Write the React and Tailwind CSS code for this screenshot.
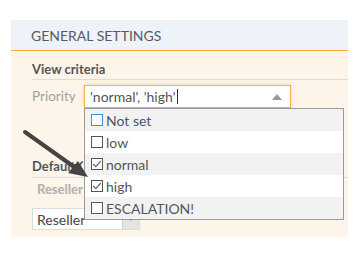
// Priority multi-select dropdown, opened over a settings panel
import { memo } from 'react';

const options = [
  { label: 'Not set', checked: false, focus: true },
  { label: 'low', checked: false },
  { label: 'normal', checked: true },
  { label: 'high', checked: true },
  { label: 'ESCALATION!', checked: false },
];

const CheckBox = ({ checked, focus }) => (
  <span
    className={`w-[12px] h-[12px] shrink-0 border bg-white flex items-center justify-center ${
      focus ? 'border-[#3d8fe0]' : 'border-[#555]'
    }`}
  >
    {checked && (
      <svg width="10" height="10" viewBox="0 0 10 10">
        <path d="M1.2 5 L3.8 7.6 L8.8 2" fill="none" stroke="#666" strokeWidth="1.2" />
      </svg>
    )}
  </span>
);

const App = memo(() => {
  return (
    <div
      className="w-[363px] h-[253px] bg-white pt-[20px] pl-[11px] text-[#555]"
      style={{ fontFamily: 'Lato, "Open Sans", sans-serif' }}
    >
      <div className="w-[337px] relative">
        {/* Cabecera */}
        <div className="h-[31px] bg-[#eef2f9] border-b border-[#f9ac3d] pl-[20px] flex items-center text-[14px] text-[#5a5a5a]">
          GENERAL SETTINGS
        </div>

        {/* Contenido */}
        <div className="bg-[#fdf4ea] h-[186px] pl-[21px] pt-[10px]">
          <div className="h-[19px] border-b border-[#dcdcdc] flex items-center text-[13px] font-bold text-[#555]">
            View criteria
          </div>

          <div className="relative flex items-center mt-[5px] h-[23px]">
            <span className="w-[52px] text-[13.5px] text-[#a0a0a0]">Priority</span>
            <div className="w-[207px] h-[23px] bg-white border border-[#f9b04a] shadow-[0_0_4px_rgba(200,160,110,0.35)] flex items-center pl-[5px] pr-[6px]">
              <span className="text-[14px] text-[#555] leading-none">'normal', 'high'</span>
              <span className="w-px h-[15px] bg-[#333] ml-[1px]" />
              <span className="ml-auto w-0 h-0 border-l-[5px] border-r-[5px] border-b-[6px] border-l-transparent border-r-transparent border-b-[#999] mr-[2px]" />
            </div>

            {/* Lista desplegable */}
            <div className="absolute left-[52px] top-[23px] w-[260px] border border-[#999] bg-white z-10">
              {options.map((o, i) => (
                <div
                  key={o.label}
                  className={`h-[22px] flex items-center pl-[6px] gap-[3px] text-[14px] ${
                    i % 2 === 0 ? 'bg-[#f2f2f2]' : 'bg-white'
                  } ${o.focus ? 'text-[#4b5670]' : 'text-[#555]'}`}
                >
                  <CheckBox checked={o.checked} focus={o.focus} />
                  <span>{o.label}</span>
                </div>
              ))}
            </div>
          </div>

          <div className="mt-[49px] h-[21px] border-b border-[#dcdcdc] flex items-center text-[13px] font-bold text-[#555]">
            <span className="w-[51px] overflow-hidden whitespace-nowrap">Default Customer</span>
          </div>
          <div className="h-[23px] flex items-center pl-[5px] text-[13px] font-bold text-[#b0b0b0]">
            Reseller
          </div>
          <div className="mt-[7px] w-[108px] h-[22px] bg-white border border-[#ddd] flex items-center">
            <span className="pl-[4px] text-[14px] text-[#444] flex-1">Reseller</span>
            <span className="w-[17px] h-full bg-[#e4e4e4] border-l border-[#ccc] flex items-center justify-center">
              <svg width="8" height="6" viewBox="0 0 8 6">
                <path d="M1 1.5 L4 4.5 L7 1.5" fill="none" stroke="#888" strokeWidth="1" />
              </svg>
            </span>
          </div>
        </div>

        {/* Flecha indicadora */}
        <svg className="absolute left-0 top-0 pointer-events-none z-20" width="337" height="233">
          <line x1="14" y1="112" x2="66" y2="149" stroke="#444" strokeWidth="4" strokeLinecap="round" />
          <polygon points="77,157 57,153 67,141" fill="#444" />
        </svg>
      </div>
    </div>
  );
});

App.displayName = 'App';

export default App;
